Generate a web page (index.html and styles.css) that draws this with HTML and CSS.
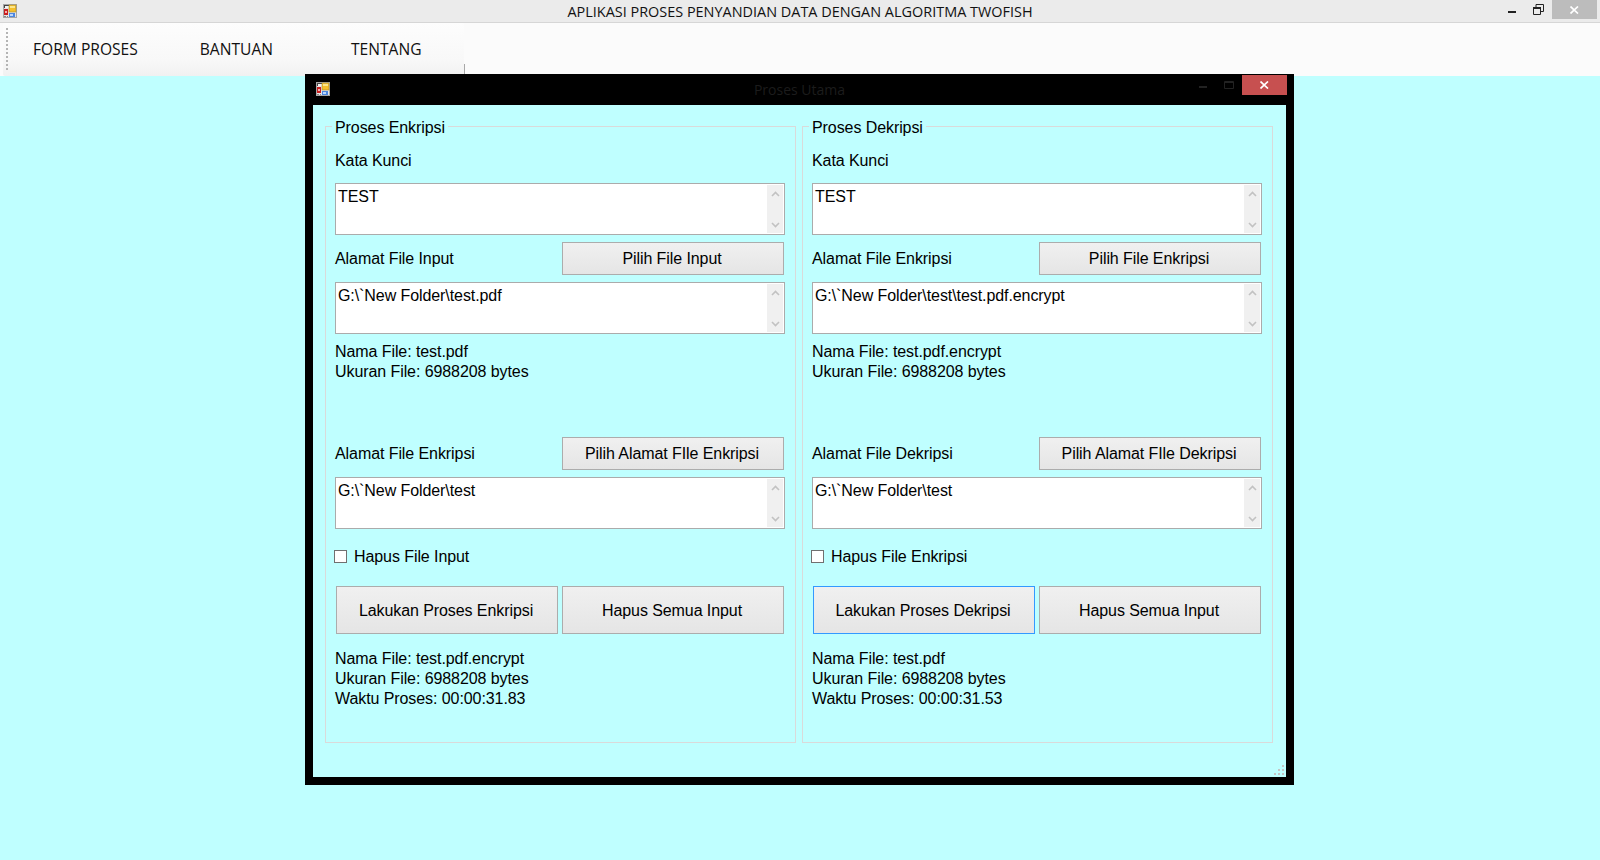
FILE: index.html
```html
<!DOCTYPE html>
<html lang="id">
<head>
<meta charset="utf-8">
<title>Aplikasi Twofish</title>
<link rel="stylesheet" href="styles.css">
</head>
<body>
<svg class="defs" width="0" height="0">
  <defs>
    <symbol id="app" viewBox="0 0 14 14">
      <rect x="0.5" y="0.5" width="13" height="13" fill="#e4e4e4" stroke="#a6a6a6"/>
      <rect x="1" y="1" width="5" height="1" fill="#444"/>
      <rect x="1" y="2" width="1" height="2" fill="#444"/>
      <rect x="2" y="2" width="4" height="2" fill="#f2f2f2"/>
      <rect x="6" y="1" width="7" height="7" fill="#f6c02c" stroke="#a98a2c" stroke-width="0.6"/>
      <rect x="7" y="2" width="5" height="2" fill="#fde68a"/>
      <rect x="1" y="5" width="4" height="6" fill="#c81e1e"/>
      <rect x="2" y="7" width="2" height="2" fill="#f5b0b0"/>
      <rect x="6" y="9" width="6" height="4" fill="#4c86e0"/>
      <rect x="7" y="10" width="3" height="2" fill="#bcd6f7"/>
      <rect x="1" y="12" width="2" height="1" fill="#888"/>
      <rect x="4" y="12" width="1" height="1" fill="#888"/>
    </symbol>
    <symbol id="chev-up" viewBox="0 0 9 6"><path d="M1 5 L4.5 1.5 L8 5" fill="none" stroke="#c2c2c2" stroke-width="1.6"/></symbol>
    <symbol id="chev-down" viewBox="0 0 9 6"><path d="M1 1 L4.5 4.5 L8 1" fill="none" stroke="#c2c2c2" stroke-width="1.6"/></symbol>
  </defs>
</svg>

<header class="titlebar">
  <svg class="appicon"><use href="#app"/></svg>
  <div class="titletext">APLIKASI PROSES PENYANDIAN DATA DENGAN ALGORITMA TWOFISH</div>
  <div class="caption">
    <span class="capbtn"><svg class="low" width="8" height="2"><rect width="8" height="2" fill="#222"/></svg></span>
    <span class="capbtn"><svg width="11" height="11"><path d="M0.5 3.5h7v7h-7z M3 3V0.5h7.5v7H8" fill="none" stroke="#222"/><path d="M0 3h8v2H0z" fill="#222"/></svg></span>
    <span class="capclose"><svg width="9" height="8"><path d="M0.5 0.5 L8 7.5 M8 0.5 L0.5 7.5" stroke="#fff" stroke-width="1.7"/></svg></span>
  </div>
</header>

<nav class="menubar">
  <div class="menu">
    <span class="grip"></span>
    <span class="menuitem item-form">FORM PROSES</span>
    <span class="menuitem item-bantuan">BANTUAN</span>
    <span class="menuitem item-tentang">TENTANG</span>
  </div>
  <span class="menuedge"></span>
</nav>

<section class="window">
  <div class="wintitle">
    <svg class="appicon"><use href="#app"/></svg>
    <div class="wintext">Proses Utama</div>
    <div class="wincaption">
      <span class="wbtn"><svg class="wlow" width="8" height="2"><rect width="8" height="2" fill="#222"/></svg></span>
      <span class="wbtn"><svg width="10" height="8"><path d="M0.5 0.5h9v7h-9z M0 1.5h10" fill="none" stroke="#222"/></svg></span>
      <span class="wclose"><svg width="9" height="8"><path d="M0.5 0.5 L8 7.5 M8 0.5 L0.5 7.5" stroke="#fff" stroke-width="1.7"/></svg></span>
    </div>
  </div>
  <div class="client">
    <fieldset class="group">
      <legend>Proses Enkripsi</legend>
      <div class="label-row">Kata Kunci</div>
      <div class="box box-a"><span class="boxtext">TEST</span><span class="sb"><svg class="ch"><use href="#chev-up"/></svg><svg class="ch"><use href="#chev-down"/></svg></span></div>
      <div class="row row-b"><span>Alamat File Input</span><button class="btn btn-pick">Pilih File Input</button></div>
      <div class="box box-b"><span class="boxtext">G:\`New Folder\test.pdf</span><span class="sb"><svg class="ch"><use href="#chev-up"/></svg><svg class="ch"><use href="#chev-down"/></svg></span></div>
      <div class="info info-a">Nama File: test.pdf<br>Ukuran File: 6988208 bytes</div>
      <div class="row row-c"><span>Alamat File Enkripsi</span><button class="btn btn-pick">Pilih Alamat FIle Enkripsi</button></div>
      <div class="box box-b"><span class="boxtext">G:\`New Folder\test</span><span class="sb"><svg class="ch"><use href="#chev-up"/></svg><svg class="ch"><use href="#chev-down"/></svg></span></div>
      <label class="check"><span class="cb"></span>Hapus File Input</label>
      <div class="actions"><button class="btn btn-act">Lakukan Proses Enkripsi</button><button class="btn btn-act">Hapus Semua Input</button></div>
      <div class="info info-b">Nama File: test.pdf.encrypt<br>Ukuran File: 6988208 bytes<br>Waktu Proses: 00:00:31.83</div>
    </fieldset>
    <fieldset class="group">
      <legend>Proses Dekripsi</legend>
      <div class="label-row">Kata Kunci</div>
      <div class="box box-a"><span class="boxtext">TEST</span><span class="sb"><svg class="ch"><use href="#chev-up"/></svg><svg class="ch"><use href="#chev-down"/></svg></span></div>
      <div class="row row-b"><span>Alamat File Enkripsi</span><button class="btn btn-pick">Pilih File Enkripsi</button></div>
      <div class="box box-b"><span class="boxtext">G:\`New Folder\test\test.pdf.encrypt</span><span class="sb"><svg class="ch"><use href="#chev-up"/></svg><svg class="ch"><use href="#chev-down"/></svg></span></div>
      <div class="info info-a">Nama File: test.pdf.encrypt<br>Ukuran File: 6988208 bytes</div>
      <div class="row row-c"><span>Alamat File Dekripsi</span><button class="btn btn-pick">Pilih Alamat FIle Dekripsi</button></div>
      <div class="box box-b"><span class="boxtext">G:\`New Folder\test</span><span class="sb"><svg class="ch"><use href="#chev-up"/></svg><svg class="ch"><use href="#chev-down"/></svg></span></div>
      <label class="check"><span class="cb"></span>Hapus File Enkripsi</label>
      <div class="actions"><button class="btn btn-act btn-focus">Lakukan Proses Dekripsi</button><button class="btn btn-act">Hapus Semua Input</button></div>
      <div class="info info-b">Nama File: test.pdf<br>Ukuran File: 6988208 bytes<br>Waktu Proses: 00:00:31.53</div>
    </fieldset>
    <svg class="sizegrip" width="10" height="10"><path d="M8 0h2v2H8z M4 4h2v2H4z M8 4h2v2H8z M0 8h2v2H0z M4 8h2v2H4z M8 8h2v2H8z" fill="#c4c4c4"/></svg>
  </div>
</section>
</body>
</html>
```
FILE: styles.css
```css
* { box-sizing: border-box; }
html, body { margin: 0; height: 100%; }
body {
  position: relative;
  overflow: hidden;
  height: 860px;
  background: #bfffff;
  font-family: "Liberation Sans", Arial, sans-serif;
  font-size: 16px;
  letter-spacing: -0.08px;
  color: #000;
}
.defs { position: absolute; }
.appicon { width: 14px; height: 14px; flex: none; display: block; }

.titlebar {
  height: 23px;
  background: #ebebeb;
  border-bottom: 1px solid #d6d6d6;
  display: flex;
  align-items: flex-start;
  position: relative;
}
.titlebar .appicon { margin: 4px 0 0 3px; }
.titletext {
  position: absolute;
  left: 0;
  right: 0;
  top: 2px;
  text-align: center;
  font-family: "Open Sans", sans-serif;
  font-size: 14.45px;
  letter-spacing: 0;
  line-height: 19px;
  color: #111;
}
.caption { margin-left: auto; display: flex; position: relative; margin-right: 3px; }
.capbtn { width: 26px; height: 19px; padding-right: 2px; display: flex; align-items: center; justify-content: center; }
.capclose { width: 45px; height: 19px; background: #bcbcbc; display: flex; align-items: center; justify-content: center; }
.low { margin-top: 5px; }

.menubar { height: 53px; background: #fbfbfb; position: relative; }
.menu {
  width: 461px;
  height: 53px;
  margin-left: 3px;
  display: flex;
  align-items: center;
  background: linear-gradient(#fdfdfd, #f8f8f8 70%, #f1f1f1);
  border-radius: 2px;
}
.menuedge {
  position: absolute;
  left: 464px;
  top: 41px;
  width: 1px;
  height: 10px;
  background: #a8a8a8;
}
.grip {
  width: 2px;
  height: 44px;
  margin-left: 3px;
  margin-top: 1px;
  background: repeating-linear-gradient(#b4b4b4 0 2px, transparent 2px 4px);
}
.menuitem {
  font-family: "Open Sans", sans-serif;
  font-size: 15.6px;
  letter-spacing: 0;
  line-height: 20px;
  color: #111;
  margin-top: -2px;
}
.item-form { margin-left: 25px; }
.item-bantuan { margin-left: 62px; }
.item-tentang { margin-left: 78px; }

.window {
  position: absolute;
  left: 305px;
  top: 74px;
  width: 989px;
  height: 711px;
  background: #000;
  padding: 0 8px 8px;
  display: flex;
  flex-direction: column;
}
.wintitle { height: 31px; display: flex; align-items: flex-start; position: relative; flex: none; }
.wintitle .appicon { margin: 8px 0 0 3px; }
.wintext {
  position: absolute;
  left: 0;
  right: 0;
  top: 6px;
  text-align: center;
  font-family: "Open Sans", sans-serif;
  font-size: 14px;
  letter-spacing: 0;
  line-height: 19px;
  color: #1c1c1c;
}
.wincaption { margin-left: auto; margin-right: -1px; display: flex; position: relative; margin-top: 1px; }
.wbtn { width: 26px; height: 20px; display: flex; align-items: center; justify-content: center; }
.wlow { margin-top: 4px; }
.wclose { width: 45px; height: 20px; background: #c75050; display: flex; align-items: center; justify-content: center; }

.client {
  flex: 1;
  background: #bfffff;
  position: relative;
  padding: 10px 13px 0 12px;
  display: grid;
  grid-template-columns: 471px 471px;
  column-gap: 6px;
  align-content: start;
}
.group {
  margin: 0;
  min-width: 0;
  height: 628px;
  padding: 0 9px;
  border: 1px solid #dadada;
}
.group legend {
  margin: 0 0 0 -3px;
  padding: 4px 3px 0;
  line-height: 18px;
  height: 22px;
}
.label-row { height: 20px; line-height: 20px; margin-top: 14px; }
.box {
  width: 450px;
  height: 52px;
  background: #fff;
  border: 1px solid #ababab;
  display: flex;
  justify-content: space-between;
  padding: 1px;
}
.box-a { margin-top: 12px; }
.box-b { margin-top: 7px; }
.boxtext { padding: 2px 0 0 1px; line-height: 20px; }
.sb {
  width: 16px;
  background: #f0f0f0;
  display: flex;
  flex-direction: column;
  justify-content: space-between;
  align-items: center;
  padding: 6px 0 5px;
}
.ch { width: 9px; height: 6px; display: block; }
.row { display: flex; align-items: center; justify-content: space-between; width: 449px; }
.row-b { margin-top: 7px; }
.row-c { margin-top: 55px; }
.btn {
  font: inherit;
  letter-spacing: inherit;
  color: #000;
  background: linear-gradient(#f0f0f0, #e5e5e5);
  border: 1px solid #acacac;
  padding: 0 2px 0 0;
  width: 222px;
}
.btn-pick { height: 33px; }
.btn-act { height: 48px; padding-top: 2px; }
.btn-focus { border-color: #3399ff; }
.info { line-height: 20px; }
.info-a { margin-top: 8px; }
.info-b { margin-top: 15px; }
.check { display: flex; align-items: center; height: 13px; margin-top: 21px; margin-left: -1px; }
.cb { width: 13px; height: 13px; background: #fff; border: 1px solid #707070; margin-right: 7px; }
.actions { display: flex; gap: 4px; margin-top: 23px; margin-left: 1px; }
.sizegrip { position: absolute; right: 2px; bottom: 2px; }
```
